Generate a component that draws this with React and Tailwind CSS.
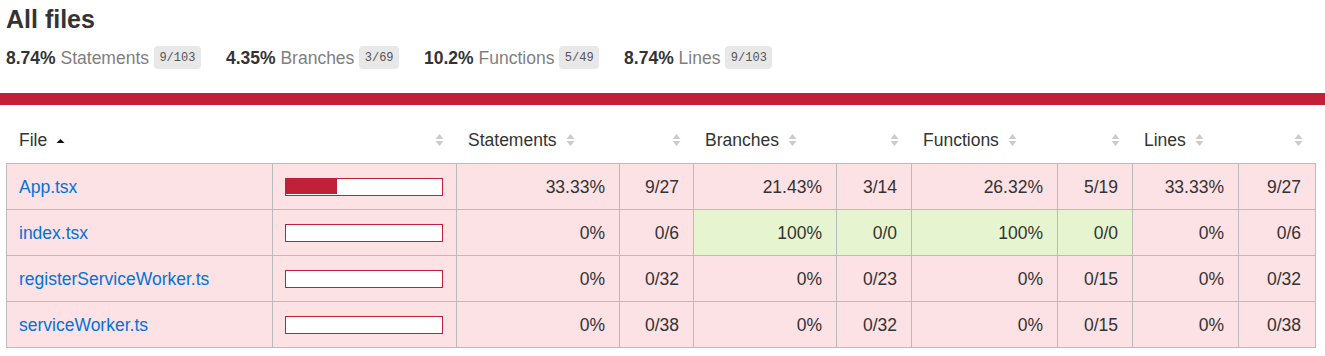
const summary = [
  { pct: "8.74%", label: "Statements", frac: "9/103" },
  { pct: "4.35%", label: "Branches", frac: "3/69" },
  { pct: "10.2%", label: "Functions", frac: "5/49" },
  { pct: "8.74%", label: "Lines", frac: "9/103" },
];

const files = [
  { name: "App.tsx", fill: 33, cells: [["33.33%", "9/27", "low"], ["21.43%", "3/14", "low"], ["26.32%", "5/19", "low"], ["33.33%", "9/27", "low"]] },
  { name: "index.tsx", fill: 0, cells: [["0%", "0/6", "low"], ["100%", "0/0", "high"], ["100%", "0/0", "high"], ["0%", "0/6", "low"]] },
  { name: "registerServiceWorker.ts", fill: 0, cells: [["0%", "0/32", "low"], ["0%", "0/23", "low"], ["0%", "0/15", "low"], ["0%", "0/32", "low"]] },
  { name: "serviceWorker.ts", fill: 0, cells: [["0%", "0/38", "low"], ["0%", "0/32", "low"], ["0%", "0/15", "low"], ["0%", "0/38", "low"]] },
];

const cols = "grid grid-cols-[266px_184px_163px_74px_143px_75px_146px_75px_106px_77px]";

// grey up/down sorter
const Sorter = () => (
  <svg width="9" height="14" viewBox="0 0 9 14" className="ml-[9px] shrink-0">
    <polygon points="0.5,6 4.5,1 8.5,6" fill="#cbcbcb" />
    <polygon points="0.5,8 8.5,8 4.5,13" fill="#cbcbcb" />
  </svg>
);

// black arrow for sorted column
const SortedUp = () => (
  <svg width="9" height="14" viewBox="0 0 9 14" className="ml-[9px] shrink-0">
    <polygon points="0.5,10 4.5,6 8.5,10" fill="#111" />
  </svg>
);

const App = () => {
  return (
    <div className="w-[1325px] h-[356px] bg-white text-[#333] font-['Liberation_Sans',Arial,sans-serif] overflow-hidden">
      {/* Title + summary */}
      <div className="pl-[6px] pt-[5px]">
        <h1 className="text-[25px] leading-[29px] font-bold m-0">All files</h1>
        <div className="flex items-center mt-[12px] text-[17.5px] leading-[20px]">
          {summary.map((s) => (
            <div key={s.label} className="flex items-center mr-[25px] whitespace-pre">
              <span className="font-bold">{s.pct}</span>
              <span className="text-[#7f7f7f]"> {s.label} </span>
              <span className="h-[23px] flex items-center px-[5.5px] rounded-[4px] bg-[#e8e8e8] text-[#555] text-[12px] font-['Liberation_Mono',monospace]">
                {s.frac}
              </span>
            </div>
          ))}
        </div>
      </div>

      {/* Status line */}
      <div className="mt-[24px] h-[12px] bg-[#C21F39]" />

      {/* Table */}
      <div className="ml-[6px] w-[1310px] text-[17.5px] leading-[20px]">
        <div className={cols + " pl-px pt-[25px] pb-[13px]"}>
          <div className="flex items-center pl-[12px]">File<SortedUp /></div>
          <div className="flex items-center justify-end pr-[13px]"><Sorter /></div>
          <div className="flex items-center pl-[11px]">Statements<Sorter /></div>
          <div className="flex items-center justify-end pr-[13px]"><Sorter /></div>
          <div className="flex items-center pl-[11px]">Branches<Sorter /></div>
          <div className="flex items-center justify-end pr-[13px]"><Sorter /></div>
          <div className="flex items-center pl-[11px]">Functions<Sorter /></div>
          <div className="flex items-center justify-end pr-[13px]"><Sorter /></div>
          <div className="flex items-center pl-[11px]">Lines<Sorter /></div>
          <div className="flex items-center justify-end pr-[13px]"><Sorter /></div>
        </div>

        <div className="border-l border-t border-[#bbb]">
          {files.map((f) => (
            <div key={f.name} className={cols}>
              <div className="h-[46px] flex items-center pl-[12px] bg-[#FCE1E5] border-r border-b border-[#bbb]">
                <span className="text-[#0074D9] whitespace-nowrap">{f.name}</span>
              </div>
              <div className="h-[46px] flex items-center pl-[12px] pr-[12px] bg-[#FCE1E5] border-r border-b border-[#bbb]">
                <div className="w-[158px] h-[18px] border border-[#C21F39] bg-white">
                  <div className="h-[15px] bg-[#C21F39]" style={{ width: f.fill + "%" }} />
                </div>
              </div>
              {f.cells.map(([pct, frac, level], i) => {
                const bg = level === "high" ? "bg-[#E6F5D0]" : "bg-[#FCE1E5]";
                return [
                  <div key={"p" + i} className={"h-[46px] flex items-center justify-end pr-[14px] border-r border-b border-[#bbb] " + bg}>
                    {pct}
                  </div>,
                  <div key={"f" + i} className={"h-[46px] flex items-center justify-end pr-[14px] border-r border-b border-[#bbb] " + bg}>
                    {frac}
                  </div>,
                ];
              })}
            </div>
          ))}
        </div>
      </div>
    </div>
  );
};

export default App;
